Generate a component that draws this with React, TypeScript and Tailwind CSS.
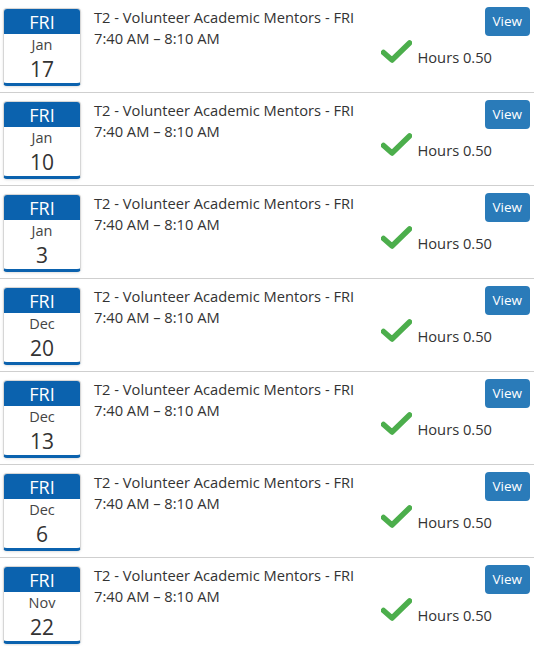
import React from 'react';

interface Shift {
  month: string;
  day: string;
}

const shifts: Shift[] = [
  { month: 'Jan', day: '17' },
  { month: 'Jan', day: '10' },
  { month: 'Jan', day: '3' },
  { month: 'Dec', day: '20' },
  { month: 'Dec', day: '13' },
  { month: 'Dec', day: '6' },
  { month: 'Nov', day: '22' },
];

const Check = () => (
  <svg width="31" height="23" viewBox="0 0 31 23" className="shrink-0">
    <path d="M2.5 12.5 L11 20 L28.5 3" fill="none" stroke="#4cae4c" strokeWidth="5.5" strokeLinecap="round" strokeLinejoin="round" />
  </svg>
);

const ShiftRow = ({ shift }: { shift: Shift }) => (
  <div className="flex h-[93px] border-b border-[#cfcfcf] pl-[3px] pr-1 pt-2">
    <div className="flex h-[78px] w-[78px] shrink-0 flex-col overflow-hidden rounded-[4px] border border-[#d6d6d6] border-b-[3px] border-b-[#0b62ae] bg-white shadow-sm">
      <div className="flex h-[25px] items-center justify-center bg-[#0b62ae] text-[18px] leading-none text-white">FRI</div>
      <div className="mt-[3px] text-center text-[14.5px] leading-[16px] text-[#444]">{shift.month}</div>
      <div className="mt-[4px] text-center text-[21px] leading-[24px] text-[#333]">{shift.day}</div>
    </div>
    <div className="-mt-px ml-[13px] flex-1 text-[14.7px] leading-[21px] text-[#333]">
      <div>T2 - Volunteer Academic Mentors - FRI</div>
      <div>7:40 AM – 8:10 AM</div>
    </div>
    <div className="-mt-px flex flex-col items-end">
      <button className="rounded-[4px] bg-[#2a7bb9] px-[8px] py-[6px] text-[13.5px] leading-[17px] text-white">View</button>
      <div className="mr-[38px] mt-[4px] flex items-end gap-[5px] text-[14.7px] text-[#333]">
        <Check />
        <span className="-mb-[3px] leading-[18px]">Hours 0.50</span>
      </div>
    </div>
  </div>
);

export default function App() {
  return (
    <div className="w-[534px] bg-white" style={{ fontFamily: '"Open Sans", sans-serif' }}>
      {shifts.map((s, i) => (
        <ShiftRow key={i} shift={s} />
      ))}
    </div>
  );
}
